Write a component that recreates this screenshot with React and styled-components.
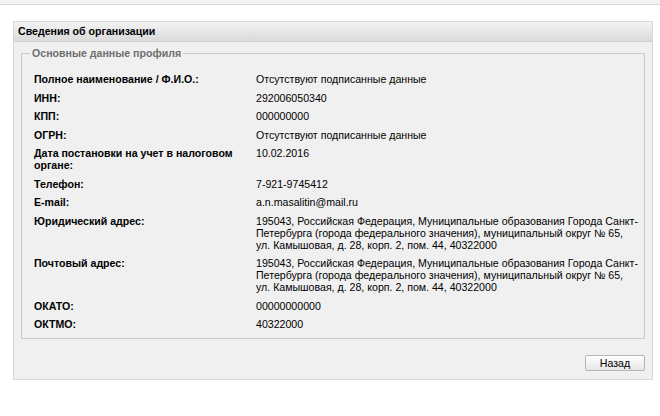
import React from 'react';
import styled, { createGlobalStyle } from 'styled-components';

const GlobalStyle = createGlobalStyle`
  body {
    margin: 0;
    background: #ffffff;
    font-family: "Liberation Sans", Arial, sans-serif;
    font-size: 10.6px;
    color: #000;
  }
`;

const TopStrip = styled.div`
  height: 4px;
  background: #f3f3f3;
  border-bottom: 1px solid #d9d9d9;
`;

const Panel = styled.section`
  margin: 16px 0 0 13px;
  width: 638px;
  background: #f0f0f0;
  border: 1px solid #d9d9d9;
`;

const PanelHeader = styled.div`
  height: 19px;
  line-height: 19px;
  padding-left: 4px;
  font-weight: bold;
  background: linear-gradient(#f3f3f3, #dadada);
  border-bottom: 1px solid #d2d2d2;
`;

const PanelBody = styled.div`
  padding: 5px 7px 8px 7px;
`;

const Fieldset = styled.fieldset`
  margin: 0;
  padding: 13px 10px 8px 12px;
  border: 1px solid #cacaca;
  min-width: 0;
`;

const Legend = styled.legend`
  margin-left: -4px;
  padding: 0 2px;
  color: #6e6e6e;
  font-weight: bold;
  line-height: 13px;
`;

const InfoGrid = styled.div`
  display: grid;
  grid-template-columns: 222px 378px;
  row-gap: 6.5px;
  line-height: 12px;
`;

const Label = styled.div`
  font-weight: bold;
  padding-right: 10px;
`;

const Value = styled.div`
  white-space: nowrap;
`;

const Footer = styled.div`
  display: flex;
  justify-content: flex-end;
  padding-top: 16px;
`;

const Button = styled.button`
  width: 60px;
  height: 16px;
  padding: 0;
  font: inherit;
  color: #000;
  background: linear-gradient(#ffffff, #e6e6e6);
  border: 1px solid #b5b5b5;
  border-radius: 2px;
`;

const address = [
  '195043, Российская Федерация, Муниципальные образования Города Санкт-',
  'Петербурга (города федерального значения), муниципальный округ № 65,',
  'ул. Камышовая, д. 28, корп. 2, пом. 44, 40322000',
];

const rows = [
  ['Полное наименование / Ф.И.О.:', ['Отсутствуют подписанные данные']],
  ['ИНН:', ['292006050340']],
  ['КПП:', ['000000000']],
  ['ОГРН:', ['Отсутствуют подписанные данные']],
  ['Дата постановки на учет в налоговом органе:', ['10.02.2016']],
  ['Телефон:', ['7-921-9745412']],
  ['E-mail:', ['a.n.masalitin@mail.ru']],
  ['Юридический адрес:', address],
  ['Почтовый адрес:', address],
  ['ОКАТО:', ['00000000000']],
  ['ОКТМО:', ['40322000']],
];

export default function App() {
  return (
    <>
      <GlobalStyle />
      <TopStrip />
      <Panel>
        <PanelHeader>Сведения об организации</PanelHeader>
        <PanelBody>
          <Fieldset>
            <Legend>Основные данные профиля</Legend>
            <InfoGrid>
              {rows.map(([label, lines]) => (
                <React.Fragment key={label}>
                  <Label>{label}</Label>
                  <Value>
                    {lines.map((line, i) => (
                      <div key={i}>{line}</div>
                    ))}
                  </Value>
                </React.Fragment>
              ))}
            </InfoGrid>
          </Fieldset>
          <Footer>
            <Button>Назад</Button>
          </Footer>
        </PanelBody>
      </Panel>
    </>
  );
}
